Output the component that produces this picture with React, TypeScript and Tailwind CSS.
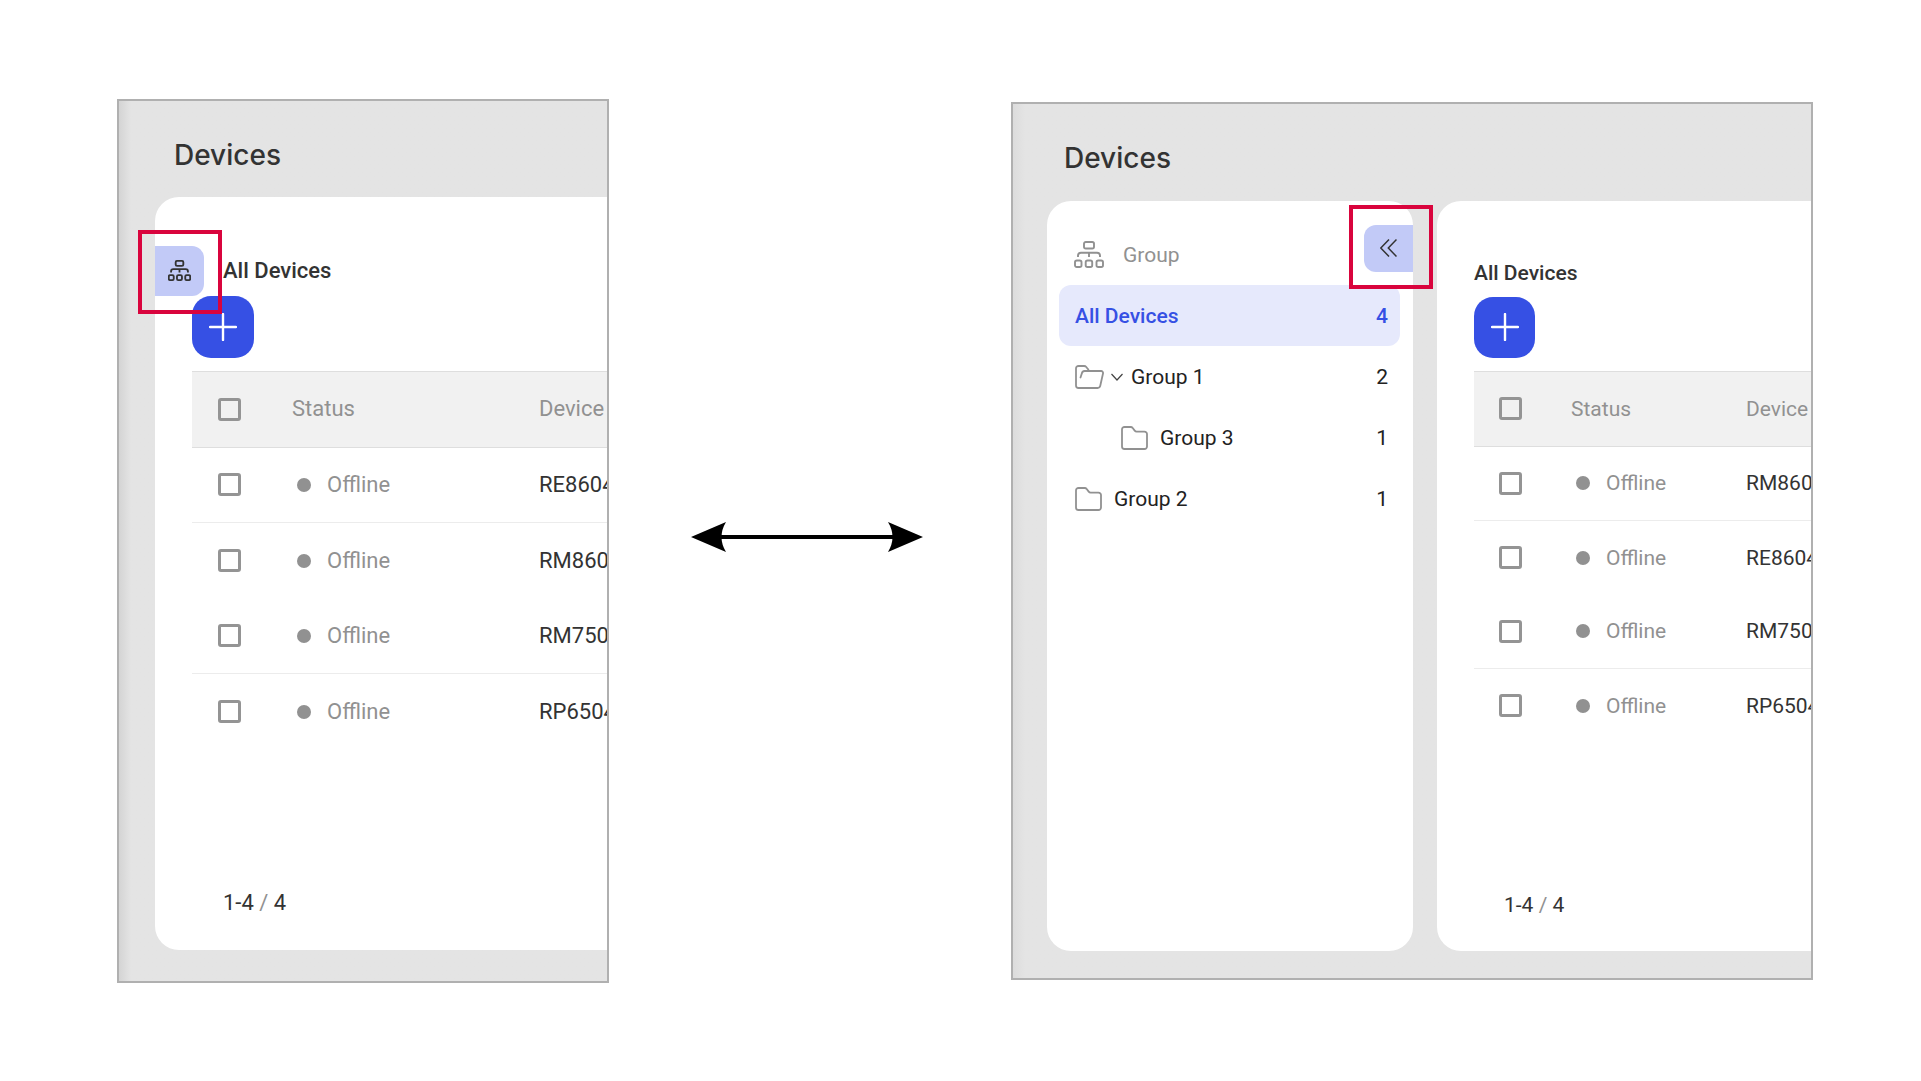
import { clsx } from "clsx";

type Device = { id: string; line?: boolean };

const collapsedDevices: Device[] = [
  { id: "RE8604", line: true },
  { id: "RM860" },
  { id: "RM750", line: true },
  { id: "RP6504" },
];

const expandedDevices: Device[] = [
  { id: "RM860", line: true },
  { id: "RE8604" },
  { id: "RM750", line: true },
  { id: "RP6504" },
];

function GroupIcon({ className }: { className?: string }) {
  return (
    <svg viewBox="0 0 30 27" fill="none" stroke="currentColor" className={className}>
      <rect x="10" y="1" width="10" height="6.5" rx="1.8" />
      <path d="M15 11.500V16M4 16v-1.200a3 3 0 0 1 3-3h16a3 3 0 0 1 3 3V16" />
      <rect x="1" y="19.5" width="6.5" height="6.5" rx="1.8" />
      <rect x="11.7" y="19.5" width="6.5" height="6.5" rx="1.8" />
      <rect x="22.5" y="19.5" width="6.5" height="6.5" rx="1.8" />
    </svg>
  );
}

function FolderIcon() {
  return (
    <svg viewBox="0 0 27 24" fill="none" stroke="#919191" strokeWidth="1.8" className="h-6 w-[27px]">
      <path d="M1 3.500A2.500 2.500 0 0 1 3.500 1h6.200a2.500 2.500 0 0 1 2 1l2 2.600a2.500 2.500 0 0 0 2 1h7.800A2.500 2.500 0 0 1 26 8.100V20.500A2.500 2.500 0 0 1 23.500 23H3.500A2.500 2.500 0 0 1 1 20.500Z" />
    </svg>
  );
}

function FolderOpenIcon() {
  return (
    <svg viewBox="0 0 29 24" fill="none" stroke="#919191" strokeWidth="1.8" strokeLinecap="round" className="h-6 w-[29px]">
      <path d="M5.500 12.500 6.800 8.600A3 3 0 0 1 9.600 6H26A2 2 0 0 1 28 8.500L25.200 21A2.600 2.600 0 0 1 22.600 23H3.500A2.500 2.500 0 0 1 1 20.500V3.500A2.500 2.500 0 0 1 3.500 1H9a3 3 0 0 1 2.300 1L12.600 3.700A3 3 0 0 1 13.600 6" />
    </svg>
  );
}

function Highlight({ className }: { className: string }) {
  return <span className={clsx("pointer-events-none absolute z-10 border-4 border-[#d9043d]", className)} />;
}

function AddButton({ className }: { className: string }) {
  return (
    <button
      type="button"
      aria-label="Add device"
      className={clsx("flex items-center justify-center bg-[#3650e4] text-white", className)}
    >
      <svg viewBox="0 0 28 28" fill="none" stroke="currentColor" strokeWidth="2.4" strokeLinecap="round" className="size-7">
        <path d="M14 1v26M1 14h26" />
      </svg>
    </button>
  );
}

function Checkbox({ label }: { label: string }) {
  return (
    <input
      type="checkbox"
      aria-label={label}
      className="block size-[23px] appearance-none rounded-[3px] border-[3px] border-[#949494]"
    />
  );
}

function DeviceTable({ devices, compact = false }: { devices: Device[]; compact?: boolean }) {
  const checkCell = compact ? "pl-[25px]" : "pl-[26px]";
  return (
    <table className="mt-[13px] w-[560px] table-fixed border-separate border-spacing-0 text-left">
      <colgroup>
        <col className={compact ? "w-[97px]" : "w-[100px]"} />
        <col className={compact ? "w-[175px]" : "w-[247px]"} />
        <col />
      </colgroup>
      <thead className="bg-[#f1f1f1] text-[#919191]">
        <tr className={compact ? "h-[76px]" : "h-[77px]"}>
          <th className={clsx("border-y border-[#dedede]", checkCell)}>
            <Checkbox label="Select all devices" />
          </th>
          <th className="border-y border-[#dedede] font-normal">Status</th>
          <th className="border-y border-[#dedede] font-normal">Device</th>
        </tr>
      </thead>
      <tbody>
        {devices.map((device) => {
          const border = device.line && "border-b border-[#ececec]";
          return (
            <tr key={device.id} className={compact ? "h-[74px]" : device.line ? "h-[75px]" : "h-[76px]"}>
              <td className={clsx(checkCell, border)}>
                <Checkbox label={device.id} />
              </td>
              <td className={clsx("text-[#919191]", border)}>
                <div className="flex items-center gap-4 pl-[5px]">
                  <span className="size-[14px] rounded-full bg-[#919191]" />
                  Offline
                </div>
              </td>
              <td className={clsx(border)}>{device.id}</td>
            </tr>
          );
        })}
      </tbody>
    </table>
  );
}

function Pagination({ className }: { className: string }) {
  return (
    <p className={clsx("mt-auto", className)}>
      1-4 <span className="text-[#919191]">/</span> 4
    </p>
  );
}

function CollapsedPanel() {
  return (
    <section className="min-w-0 overflow-hidden border-2 border-[#b0b0b0] bg-[#e4e4e4] bg-linear-to-r from-[#d4d4d4] to-[#e4e4e4] to-[12px] pt-9 pb-[31px] pl-9 text-[22px]">
      <h1 className="pl-[19px] font-['Inter',sans-serif] text-[28px] leading-9 font-medium">Devices</h1>
      <div className="mt-6 flex min-h-[753px] flex-col rounded-l-3xl bg-white pt-[49px] pb-[33px]">
        <div className="flex items-center gap-[19px]">
          <button
            type="button"
            aria-label="Show groups"
            className="relative flex h-[50px] w-[49px] items-center justify-center rounded-r-xl bg-[#c2caf7]"
          >
            <GroupIcon className="h-[21px] w-[23px] stroke-[2.4]" />
            <Highlight className="-top-4 -right-[18px] -bottom-[18px] -left-[17px]" />
          </button>
          <h2 className="font-medium">All Devices</h2>
        </div>
        <div className="pl-[37px]">
          <AddButton className="size-[62px] rounded-[19px]" />
          <DeviceTable devices={collapsedDevices} />
        </div>
        <Pagination className="pl-[68px]" />
      </div>
    </section>
  );
}

function GroupList() {
  return (
    <aside className="min-h-[750px] w-[366px] shrink-0 rounded-3xl bg-white pt-6">
      <div className="flex items-start pl-[27px]">
        <div className="mt-4 flex items-center gap-[19px] text-[#919191]">
          <GroupIcon className="h-[27px] w-[30px] stroke-[1.9]" />
          Group
        </div>
        <button
          type="button"
          aria-label="Hide groups"
          className="relative ml-auto flex h-[47px] w-[49px] items-center justify-center rounded-l-xl bg-[#c2caf7]"
        >
          <svg viewBox="0 0 17 18" fill="none" stroke="currentColor" strokeWidth="1.5" className="h-[18px] w-[17px]">
            <path d="M9 .5.800 9 9 17.500M16.500.500 8.300 9l8.200 8.500" />
          </svg>
          <Highlight className="-top-5 -right-5 -bottom-[17px] -left-[15px]" />
        </button>
      </div>
      <ul className="mt-[13px] pr-[13px] pl-3 text-[#222] [&>li]:flex [&>li]:h-[61px] [&>li]:items-center [&>li]:pt-0.5 [&>li]:pr-3 [&>li]:pl-4">
        <li className="rounded-xl bg-[#e6e9fc] font-medium text-[#3650e4]">
          All Devices
          <span className="ml-auto">4</span>
        </li>
        <li>
          <FolderOpenIcon />
          <svg viewBox="0 0 12 8" fill="none" stroke="#444" strokeWidth="1.2" className="mr-2 ml-[7px] h-2 w-3">
            <path d="m.500 1 5.500 6 5.500-6" />
          </svg>
          Group 1<span className="ml-auto">2</span>
        </li>
        <li>
          <span className="mr-3 ml-[46px]">
            <FolderIcon />
          </span>
          Group 3<span className="ml-auto">1</span>
        </li>
        <li>
          <span className="mr-3">
            <FolderIcon />
          </span>
          Group 2<span className="ml-auto">1</span>
        </li>
      </ul>
    </aside>
  );
}

function ExpandedPanel() {
  return (
    <section className="min-w-0 overflow-hidden border-2 border-[#b0b0b0] bg-[#e4e4e4] bg-linear-to-r from-[#dcdcdc] to-[#e4e4e4] to-[12px] pt-9 pb-[27px] pl-[34px] text-[21px]">
      <h1 className="pl-[17px] font-['Inter',sans-serif] text-[28px] leading-9 font-medium">Devices</h1>
      <div className="mt-[25px] flex gap-6">
        <GroupList />
        <div className="flex min-h-[750px] min-w-0 flex-1 flex-col rounded-l-3xl bg-white pt-[58px] pb-8 pl-[37px]">
          <h2 className="font-medium">All Devices</h2>
          <AddButton className="mt-2.5 size-[61px] rounded-[19px]" />
          <DeviceTable devices={expandedDevices} compact />
          <Pagination className="pl-[30px]" />
        </div>
      </div>
    </section>
  );
}

export default function App() {
  return (
    <main className="grid min-h-screen grid-cols-[492fr_402fr_802fr] items-center bg-white pr-[108px] pl-[117px] font-['Roboto',sans-serif] leading-7 text-[#333]">
      <CollapsedPanel />
      <div className="flex justify-center pr-1.5 pb-2">
        <svg viewBox="0 0 232 30" className="w-[232px]">
          <path d="M26 15h180" stroke="#000" strokeWidth="4" />
          <path d="M0 15 35 0q-9 15 0 30ZM232 15 197 0q9 15 0 30Z" />
        </svg>
      </div>
      <ExpandedPanel />
    </main>
  );
}
